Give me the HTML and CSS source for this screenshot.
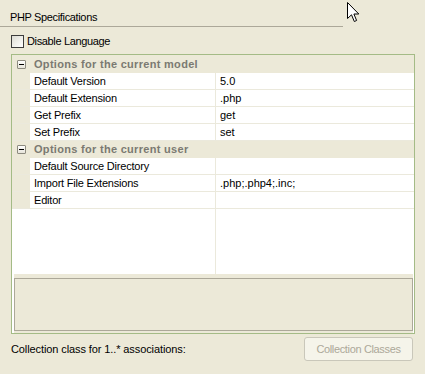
FILE: index.html
```html
<!DOCTYPE html>
<html>
<head>
<meta charset="utf-8">
<title>PHP Specifications</title>
<link rel="stylesheet" href="styles.css">
</head>
<body>
<div class="page">
  <div class="title">PHP Specifications</div>
  <div class="sep"></div>
  <label class="check-row">
    <span class="checkbox"></span>
    <span class="check-label">Disable Language</span>
  </label>
  <div class="group">
    <div class="sheet">
      <div class="cat">
        <span class="gutter"><span class="toggle"></span></span>
        <span class="cat-name">Options for the current model</span>
      </div>
      <div class="row"><span class="gutter"></span><span class="name">Default Version</span><span class="value">5.0</span></div>
      <div class="row"><span class="gutter"></span><span class="name">Default Extension</span><span class="value">.php</span></div>
      <div class="row"><span class="gutter"></span><span class="name">Get Prefix</span><span class="value">get</span></div>
      <div class="row"><span class="gutter"></span><span class="name">Set Prefix</span><span class="value">set</span></div>
      <div class="cat">
        <span class="gutter"><span class="toggle"></span></span>
        <span class="cat-name">Options for the current user</span>
      </div>
      <div class="row"><span class="gutter"></span><span class="name">Default Source Directory</span><span class="value"></span></div>
      <div class="row"><span class="gutter"></span><span class="name">Import File Extensions</span><span class="value">.php;.php4;.inc;</span></div>
      <div class="row"><span class="gutter"></span><span class="name">Editor</span><span class="value"></span></div>
      <div class="filler"><span class="filler-left"></span><span class="filler-right"></span></div>
    </div>
    <div class="desc-wrap"><div class="desc"></div></div>
  </div>
  <div class="bottom">
    <span class="bottom-label">Collection class for 1..* associations:</span>
    <button class="btn" disabled>Collection Classes</button>
  </div>
  <svg class="cursor" width="13" height="21" viewBox="0 0 13 21">
    <path d="M0.5 0.5 L0.5 16.5 L4.5 12.8 L7.3 19.5 L9.6 18.5 L6.9 12 L11.8 12 Z" fill="#fff" stroke="#000" stroke-width="1" stroke-linejoin="miter"/>
  </svg>
</div>
</body>
</html>
```

FILE: styles.css
```css
html, body {
  margin: 0;
  padding: 0;
  background: #ece9d8;
}
body {
  font-family: "Liberation Sans", Arial, sans-serif;
  font-size: 11px;
  color: #000;
}
.page {
  position: relative;
  width: 425px;
  height: 374px;
  overflow: hidden;
}
.title {
  padding: 11px 0 0 10px;
  line-height: 13px;
  letter-spacing: -0.35px;
}
.sep {
  margin-top: 2px;
  width: 343px;
  height: 1px;
  background: #aca899;
}
.check-row {
  display: flex;
  align-items: center;
  height: 13px;
  margin-top: 8px;
  padding-left: 11px;
}
.checkbox {
  width: 11px;
  height: 11px;
  border: 1px solid #3c3c3c;
  background: linear-gradient(135deg, #dcdcd4 0%, #f2f2ee 60%, #ffffff 100%);
}
.check-label {
  margin-left: 3px;
  line-height: 13px;
  letter-spacing: -0.35px;
}
.group {
  box-sizing: border-box;
  margin: 6px 0 0 11px;
  width: 404px;
  height: 280px;
  border: 1px solid #a4bb86;
  background: #fff;
  display: flex;
  flex-direction: column;
}
.sheet {
  height: 219px;
  display: flex;
  flex-direction: column;
  background: #fff;
}
.cat {
  display: flex;
  height: 16px;
  border-bottom: 1px solid #ece9d8;
  background: #ece9d8;
}
.sheet > .cat:first-child {
  height: 17px;
}
.sheet > .cat:first-child .gutter {
  padding-top: 1px;
}
.gutter {
  width: 18px;
  flex: none;
  background: #ece9d8;
  display: flex;
  align-items: center;
}
.toggle {
  position: relative;
  box-sizing: border-box;
  width: 9px;
  height: 9px;
  margin-left: 5px;
  border: 1px solid #8d8b80;
  border-radius: 1px;
  background: linear-gradient(180deg, #ffffff 0%, #e6e4da 100%);
}
.toggle::after {
  content: "";
  position: absolute;
  left: 1px;
  top: 3px;
  width: 5px;
  height: 1px;
  background: #000;
}
.cat-name {
  align-self: flex-end;
  padding-left: 4px;
  line-height: 16px;
  font-weight: bold;
  color: #7b7a72;
  letter-spacing: 0.3px;
}
.row {
  display: flex;
  height: 16px;
  border-bottom: 1px solid #ebe9dc;
  line-height: 16px;
}
.name {
  width: 181px;
  flex: none;
  padding-left: 4px;
  border-right: 1px solid #ebe9dc;
  letter-spacing: -0.2px;
  white-space: nowrap;
}
.value {
  flex: 1;
  padding-left: 4px;
  white-space: nowrap;
}
.filler {
  flex: 1;
  display: flex;
}
.filler-left {
  width: 203px;
  border-right: 1px solid #ebe9dc;
}
.filler-right {
  flex: 1;
}
.desc-wrap {
  flex: 1;
  margin: 0 1px 0 2px;
  padding: 4px 0 2px 0;
  background: #ece9d8;
}
.desc {
  box-sizing: border-box;
  height: 53px;
  border: 1px solid #aca899;
  background: #ece9d8;
}
.bottom {
  display: flex;
  align-items: center;
  justify-content: space-between;
  margin-top: 3px;
  padding: 0 12px 0 11px;
  height: 24px;
}
.bottom-label {
  letter-spacing: -0.1px;
}
.btn {
  box-sizing: border-box;
  width: 109px;
  height: 24px;
  padding: 0;
  border: 1px solid #c9c7ba;
  border-radius: 3px;
  background: #f5f4ea;
  color: #aca899;
  font-family: "Liberation Sans", Arial, sans-serif;
  font-size: 11px;
  letter-spacing: -0.35px;
}
.cursor {
  position: absolute;
  left: 347px;
  top: 2px;
}
```
